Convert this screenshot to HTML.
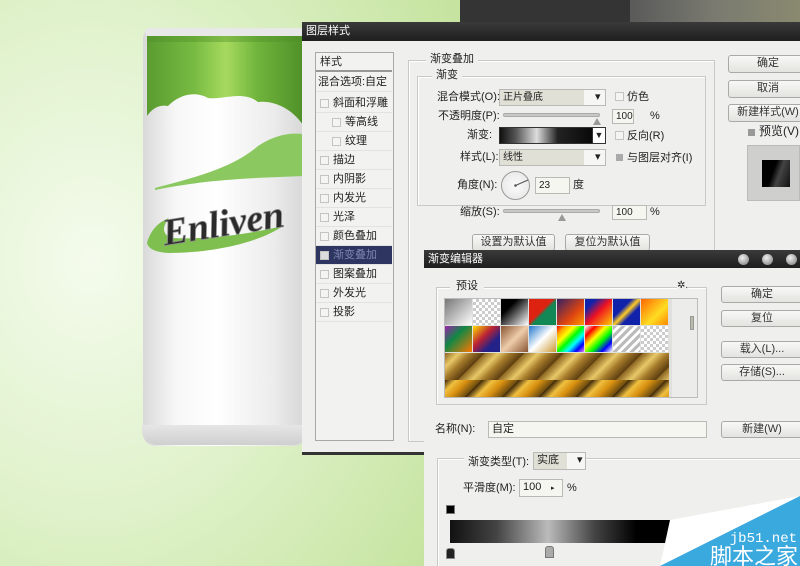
<!DOCTYPE html>
<html><head><meta charset="utf-8"><style>
*{margin:0;padding:0;box-sizing:border-box}
html,body{width:800px;height:566px;overflow:hidden}
body{position:relative;font-family:"Liberation Sans","Noto Sans CJK SC",sans-serif;font-size:11px;color:#222;
background:radial-gradient(ellipse 420px 500px at 90px 260px,#f4fbec 0%,#e2f3cf 45%,#c6e4a0 100%)}
.a{position:absolute}
.t{position:absolute;white-space:nowrap;font-size:11px;line-height:13px}
.dlg{background:#efefed}
.title{background:linear-gradient(#3a3a3a,#1e1e1e);color:#fff;font-size:11px;line-height:18px;padding-left:4px}
.grp{position:absolute;border:1px solid #c8c8c4;box-shadow:inset 1px 1px 0 #fff}
.btn{position:absolute;border:1px solid #a9a9a5;border-radius:3px;background:linear-gradient(#f8f8f6,#e3e3df);text-align:center;font-size:11px;line-height:15px;color:#333}
.inp{position:absolute;border:1px solid #b9b9b5;background:#f6f6f0;font-size:10px;line-height:15px;padding-left:3px}
.cb{position:absolute;width:9px;height:9px;border:1px solid #c4c4c0;background:#f4f4f4}
.li{position:absolute;left:316px;width:76px;height:19px;border-bottom:1px solid #e2e2e0;font-size:11px;line-height:18px}
.sw{position:absolute;width:27px;height:26px}
</style></head><body>
<div class="a" style="left:460px;top:0;width:340px;height:24px;background:#343434"></div>
<div class="a" style="left:630px;top:0;width:170px;height:28px;background:linear-gradient(90deg,#5a5a5a,#7a7a70 50%,#8a8a70)"></div>
<!-- can -->
<div class="a" style="left:143px;top:28px;width:163px;height:418px;border-radius:10px 10px 12px 12px;background:linear-gradient(90deg,#d9d9d9 0%,#f7f7f7 20%,#ffffff 45%,#ececec 80%,#d6d6d6 100%)"></div>
<div class="a" style="left:145px;top:28px;width:160px;height:8px;border-radius:6px;background:#e8e8e8"></div>
<svg class="a" style="left:143px;top:28px" width="165" height="240" viewBox="0 0 165 240">
<defs><linearGradient id="g" x1="0" x2="1" y1="0" y2="0">
<stop offset="0" stop-color="#5a9c30"/><stop offset="0.3" stop-color="#78bb42"/><stop offset="0.5" stop-color="#a6da5e"/><stop offset="0.7" stop-color="#70b43c"/><stop offset="1" stop-color="#4e8f28"/></linearGradient></defs>
<path d="M4 8 L162 8 L162 100 C150 80 130 72 115 74 C100 62 80 72 65 70 C50 62 35 68 25 78 C15 76 8 82 4 88 Z" fill="url(#g)"/>
<rect x="4" y="8" width="158" height="6" fill="#4e8f28" opacity="0.4"/>
<path d="M12 160 C50 150 90 140 115 118 C135 105 150 105 160 106 L160 148 C120 150 70 150 12 162 Z" fill="#8cc860"/>
<path d="M4 215 C8 200 18 193 26 190 C20 198 18 205 28 210 C70 212 110 205 140 198 C115 215 70 225 25 225 C14 224 6 222 4 215 Z" fill="#7fbf4f"/>
<text x="18" y="208" font-family="Liberation Serif,serif" font-style="italic" font-weight="bold" font-size="38" fill="#2b2b2b" stroke="#888" stroke-width="0.8" transform="rotate(-9 80 190)">Enliven</text>
</svg>
<div class="a" style="left:142px;top:425px;width:165px;height:20px;border-radius:0 0 14px 14px;background:linear-gradient(#e6e6e6,#cfcfcf)"></div>

<!-- Layer style dialog -->
<div class="a dlg" style="left:302px;top:22px;width:498px;height:433px;border-bottom:3px solid #333"></div>
<div class="a title" style="left:302px;top:22px;width:498px;height:19px">图层样式</div>
<div class="a" style="left:315px;top:52px;width:79px;height:389px;border:1px solid #a8a8a4;background:#f2f2f0"></div>
<div class="li" style="top:53px;border-bottom:2px solid #999;padding-left:4px">样式</div>
<div class="li" style="top:73px;padding-left:2px">混合选项:自定</div>
<div class="li" style="top:94px"><span class="cb" style="left:4px;top:5px"></span><span class="t" style="left:17px;top:3px">斜面和浮雕</span></div>
<div class="li" style="top:113px"><span class="cb" style="left:16px;top:5px"></span><span class="t" style="left:29px;top:3px">等高线</span></div>
<div class="li" style="top:132px"><span class="cb" style="left:16px;top:5px"></span><span class="t" style="left:29px;top:3px">纹理</span></div>
<div class="li" style="top:151px"><span class="cb" style="left:4px;top:5px"></span><span class="t" style="left:17px;top:3px">描边</span></div>
<div class="li" style="top:170px"><span class="cb" style="left:4px;top:5px"></span><span class="t" style="left:17px;top:3px">内阴影</span></div>
<div class="li" style="top:189px"><span class="cb" style="left:4px;top:5px"></span><span class="t" style="left:17px;top:3px">内发光</span></div>
<div class="li" style="top:208px"><span class="cb" style="left:4px;top:5px"></span><span class="t" style="left:17px;top:3px">光泽</span></div>
<div class="li" style="top:227px"><span class="cb" style="left:4px;top:5px"></span><span class="t" style="left:17px;top:3px">颜色叠加</span></div>
<div class="li" style="top:246px;background:#2e3560;color:#7d85b0"><span class="cb" style="left:4px;top:5px;background:#ddd"></span><span class="t" style="left:17px;top:3px">渐变叠加</span></div>
<div class="li" style="top:265px"><span class="cb" style="left:4px;top:5px"></span><span class="t" style="left:17px;top:3px">图案叠加</span></div>
<div class="li" style="top:284px"><span class="cb" style="left:4px;top:5px"></span><span class="t" style="left:17px;top:3px">外发光</span></div>
<div class="li" style="top:303px"><span class="cb" style="left:4px;top:5px"></span><span class="t" style="left:17px;top:3px">投影</span></div>

<div class="grp" style="left:408px;top:60px;width:307px;height:382px"></div>
<div class="t" style="left:426px;top:53px;background:#efefed;padding:0 4px">渐变叠加</div>
<div class="grp" style="left:417px;top:76px;width:289px;height:130px"></div>
<div class="t" style="left:432px;top:69px;background:#efefed;padding:0 4px">渐变</div>
<div class="t" style="left:437px;top:91px">混合模式(O):</div>
<div class="inp" style="left:499px;top:89px;width:107px;height:17px;background:linear-gradient(90deg,#e0e0d6 80%,#f6f6f4 80%)">正片叠底<span class="t" style="left:95px;top:1px">▾</span></div>
<div class="cb" style="left:615px;top:92px"></div><div class="t" style="left:627px;top:91px">仿色</div>
<div class="t" style="left:438px;top:110px">不透明度(P):</div>
<div class="a" style="left:503px;top:113px;width:97px;height:4px;border-radius:2px;background:#c8c8c4;border:1px solid #aaa"></div>
<div class="a" style="left:593px;top:114px;width:0;height:0;border:4px solid transparent;border-bottom:7px solid #999"></div>
<div class="inp" style="left:612px;top:109px;width:22px;height:15px;line-height:13px">100</div><div class="t" style="left:650px;top:110px">%</div>
<div class="t" style="left:467px;top:129px">渐变:</div>
<div class="a" style="left:499px;top:127px;width:107px;height:17px;border:1px solid #333;background:linear-gradient(90deg,#111,#555 15%,#ddd 35%,#222 55%,#000)"></div>
<div class="a" style="left:592px;top:128px;width:13px;height:15px;background:#fff;border-left:1px solid #333;font-size:9px;text-align:center;line-height:15px">▼</div>
<div class="cb" style="left:615px;top:131px"></div><div class="t" style="left:627px;top:130px">反向(R)</div>
<div class="t" style="left:460px;top:151px">样式(L):</div>
<div class="inp" style="left:499px;top:149px;width:107px;height:17px;background:linear-gradient(90deg,#e0e0d6 80%,#f6f6f4 80%)">线性<span class="t" style="left:95px;top:1px">▾</span></div>
<div class="cb" style="left:615px;top:153px;background:#aaa;border-color:#eee"></div><div class="t" style="left:627px;top:152px">与图层对齐(I)</div>
<div class="t" style="left:457px;top:179px">角度(N):</div>
<div class="a" style="left:501px;top:171px;width:29px;height:29px;border-radius:50%;border:1px solid #999;background:radial-gradient(#fafafa,#e4e4e4)"></div>
<svg class="a" style="left:501px;top:171px" width="29" height="29"><line x1="14.5" y1="14.5" x2="27" y2="9" stroke="#555"/><circle cx="14.5" cy="14.5" r="1.3" fill="#555"/></svg>
<div class="inp" style="left:535px;top:177px;width:35px;height:17px">23</div><div class="t" style="left:573px;top:179px">度</div>
<div class="t" style="left:460px;top:206px">缩放(S):</div>
<div class="a" style="left:503px;top:209px;width:97px;height:4px;border-radius:2px;background:#c8c8c4;border:1px solid #aaa"></div>
<div class="a" style="left:558px;top:210px;width:0;height:0;border:4px solid transparent;border-bottom:7px solid #999"></div>
<div class="inp" style="left:612px;top:205px;width:35px;height:15px;line-height:13px">100</div><div class="t" style="left:650px;top:206px">%</div>
<div class="btn" style="left:472px;top:234px;width:83px;height:17px">设置为默认值</div>
<div class="btn" style="left:565px;top:234px;width:85px;height:17px">复位为默认值</div>

<div class="btn" style="left:728px;top:55px;width:80px;height:18px">确定</div>
<div class="btn" style="left:728px;top:80px;width:80px;height:18px">取消</div>
<div class="btn" style="left:728px;top:104px;width:80px;height:18px">新建样式(W)</div>
<div class="cb" style="left:747px;top:128px;background:#999;border-color:#eee"></div><div class="t" style="left:759px;top:125px;font-size:12px">预览(V)</div>
<div class="a" style="left:747px;top:145px;width:53px;height:56px;background:#cfcfcd;border:1px solid #bbb"></div>
<div class="a" style="left:762px;top:160px;width:28px;height:27px;background:linear-gradient(110deg,#000 40%,#444 60%,#111)"></div>

<!-- Gradient editor -->
<div class="a dlg" style="left:424px;top:250px;width:376px;height:316px"></div>
<div class="a title" style="left:424px;top:250px;width:376px;height:18px">渐变编辑器</div>
<div class="a" style="left:738px;top:254px;width:11px;height:11px;border-radius:50%;background:radial-gradient(circle at 40% 35%,#eee,#777)"></div>
<div class="a" style="left:762px;top:254px;width:11px;height:11px;border-radius:50%;background:radial-gradient(circle at 40% 35%,#eee,#777)"></div>
<div class="a" style="left:786px;top:254px;width:11px;height:11px;border-radius:50%;background:radial-gradient(circle at 40% 35%,#eee,#777)"></div>
<div class="grp" style="left:436px;top:287px;width:271px;height:118px"></div>
<div class="t" style="left:450px;top:280px;background:#efefed;padding:0 6px">预设</div>
<div class="t" style="left:677px;top:279px;background:#efefed;font-size:10px">✲.</div>
<div class="a" style="left:444px;top:298px;width:254px;height:100px;background:#e0e0de;border:1px solid #bbb"></div>
<div class="a" style="left:672px;top:299px;width:25px;height:98px;background:#ececea"></div>
<div class="a" style="left:690px;top:316px;width:4px;height:14px;background:#bba;border:1px solid #999"></div>
<div class="sw" style="left:445px;top:299px;background:linear-gradient(135deg,#777,#fff)"></div>
<div class="sw" style="left:473px;top:299px;background:repeating-conic-gradient(#ccc 0 25%,#fff 0 50%) 0 0/6px 6px"></div>
<div class="sw" style="left:501px;top:299px;background:linear-gradient(135deg,#000 30%,#fff)"></div>
<div class="sw" style="left:529px;top:299px;background:linear-gradient(135deg,#d21 45%,#185 55%)"></div>
<div class="sw" style="left:557px;top:299px;background:linear-gradient(135deg,#326,#d41 60%,#f90)"></div>
<div class="sw" style="left:585px;top:299px;background:linear-gradient(135deg,#12a 20%,#e12 50%,#fc0)"></div>
<div class="sw" style="left:613px;top:299px;background:linear-gradient(135deg,#12a 35%,#fc2 50%,#12a 65%)"></div>
<div class="sw" style="left:641px;top:299px;background:linear-gradient(135deg,#f60,#fd2 60%,#f80)"></div>
<div class="sw" style="left:445px;top:326px;background:linear-gradient(135deg,#92a,#184 40%,#f70)"></div>
<div class="sw" style="left:473px;top:326px;background:linear-gradient(135deg,#fd0,#b23 40%,#228 70%)"></div>
<div class="sw" style="left:501px;top:326px;background:linear-gradient(135deg,#853,#eca 50%,#853)"></div>
<div class="sw" style="left:529px;top:326px;background:linear-gradient(135deg,#27c,#fff 50%,#c93)"></div>
<div class="sw" style="left:557px;top:326px;background:linear-gradient(135deg,red,orange,yellow,lime,cyan,blue,violet)"></div>
<div class="sw" style="left:585px;top:326px;background:linear-gradient(135deg,#fff,red,yellow,lime,blue,#fff)"></div>
<div class="sw" style="left:613px;top:326px;background:repeating-linear-gradient(135deg,#bbb 0 3px,#fff 3px 6px)"></div>
<div class="sw" style="left:641px;top:326px;background:repeating-conic-gradient(#ccc 0 25%,#fff 0 50%) 0 0/6px 6px"></div>
<div class="sw" style="left:445px;top:353px;width:224px;height:27px;background:repeating-linear-gradient(135deg,#8a6420 0,#e8c868 10px,#a47a2a 18px,#5a3c10 28px)"></div>
<div class="sw" style="left:445px;top:380px;width:224px;height:17px;background:repeating-linear-gradient(135deg,#3a2408 0,#f0c040 8px,#d89010 16px,#6a4a10 26px)"></div>

<div class="btn" style="left:721px;top:286px;width:82px;height:17px">确定</div>
<div class="btn" style="left:721px;top:310px;width:82px;height:17px">复位</div>
<div class="btn" style="left:721px;top:341px;width:82px;height:17px">载入(L)...</div>
<div class="btn" style="left:721px;top:364px;width:82px;height:17px">存储(S)...</div>
<div class="t" style="left:435px;top:423px">名称(N):</div>
<div class="inp" style="left:488px;top:421px;width:219px;height:17px;font-size:11px">自定</div>
<div class="btn" style="left:721px;top:421px;width:82px;height:17px">新建(W)</div>
<div class="grp" style="left:437px;top:458px;width:370px;height:108px;border-bottom:none"></div>
<div class="t" style="left:464px;top:456px;background:#efefed;padding:0 4px">渐变类型(T):</div>
<div class="inp" style="left:533px;top:452px;width:53px;height:18px;background:linear-gradient(90deg,#e0e0d6 65%,#f6f6f4 65%);font-size:11px">实底<span class="t" style="left:43px;top:1px">▾</span></div>
<div class="t" style="left:463px;top:482px">平滑度(M):</div>
<div class="inp" style="left:519px;top:479px;width:44px;height:18px;font-size:11px">100<span class="t" style="left:31px;top:2px;font-size:7px">▸</span></div>
<div class="t" style="left:567px;top:482px">%</div>
<div class="a" style="left:446px;top:505px;width:9px;height:9px;background:#000;border:1px solid #777"></div>
<div class="a" style="left:450px;top:520px;width:233px;height:23px;background:linear-gradient(90deg,#111,#444 20%,#bbb 42%,#444 62%,#000 80%)"></div>
<div class="a" style="left:446px;top:548px;width:9px;height:11px;background:#222;border:1px solid #888;border-radius:3px 3px 0 0"></div>
<div class="a" style="left:545px;top:546px;width:9px;height:12px;background:#aaa;border:1px solid #777;border-radius:3px 3px 0 0"></div>
<svg class="a" style="left:640px;top:490px" width="160" height="76"><polygon points="30,30 160,6 20,76" fill="#fff"/><polygon points="160,6 160,76 20,76" fill="#3aa9de"/>
<text x="157" y="52" text-anchor="end" font-family="Liberation Mono,monospace" font-size="14" fill="#fff">jb51.net</text>
<text x="158" y="74" text-anchor="end" font-family="Noto Sans CJK SC,sans-serif" font-size="22" fill="#fff">脚本之家</text></svg>
</body></html>
